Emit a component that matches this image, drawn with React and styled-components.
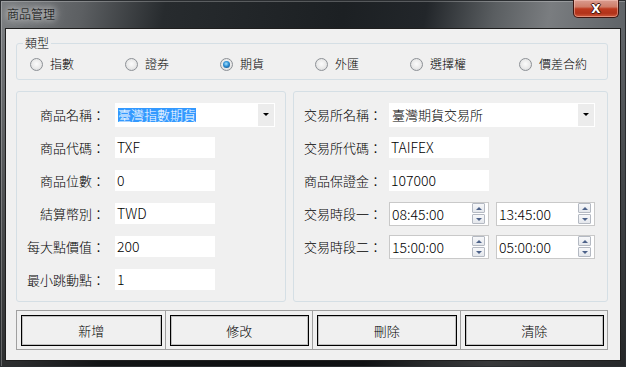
import React from 'react';
import styled, { createGlobalStyle } from 'styled-components';

const GlobalStyle = createGlobalStyle`
  html, body {
    margin: 0;
    padding: 0;
    background: #fff;
  }
  body {
    font-family: 'Noto Sans CJK TC', 'Liberation Sans', sans-serif;
    font-weight: 300;
  }
`;

const types = ['指數', '證券', '期貨', '外匯', '選擇權', '價差合約'];

const leftRows = [
  { label: '商品名稱：', kind: 'combo', value: '臺灣指數期貨', selected: true },
  { label: '商品代碼：', value: 'TXF' },
  { label: '商品位數：', value: '0' },
  { label: '結算幣別：', value: 'TWD' },
  { label: '每大點價值：', value: '200' },
  { label: '最小跳動點：', value: '1' },
];

const rightRows = [
  { label: '交易所名稱：', kind: 'combo', value: '臺灣期貨交易所' },
  { label: '交易所代碼：', value: 'TAIFEX' },
  { label: '商品保證金：', value: '107000' },
  { label: '交易時段一：', kind: 'time', value: ['08:45:00', '13:45:00'] },
  { label: '交易時段二：', kind: 'time', value: ['15:00:00', '05:00:00'] },
];

const actions = ['新增', '修改', '刪除', '清除'];

const App = () => {
  const renderField = (row, comboWidth) => {
    if (row.kind === 'combo') {
      return (
        <ComboBox $width={comboWidth}>
          <ComboText>
            <ComboValue $selected={row.selected}>{row.value}</ComboValue>
          </ComboText>
          <DropButton />
        </ComboBox>
      );
    }
    if (row.kind === 'time') {
      return (
        <TimeRow>
          {row.value.map((t, i) => (
            <TimePicker key={t} $width={i === 0 ? 100 : 99}>
              <TimeText>{t}</TimeText>
              <Spinner>
                <SpinButton $dir="up" />
                <SpinButton $dir="down" />
              </Spinner>
            </TimePicker>
          ))}
        </TimeRow>
      );
    }
    return <TextBox>{row.value}</TextBox>;
  };

  return (
    <>
      <GlobalStyle />
      <Window>
        <TitleBar>
          <TitleText>商品管理</TitleText>
          <CloseButton>X</CloseButton>
        </TitleBar>
        <Client>
          <TypeGroup>
            <GroupLegend>類型</GroupLegend>
            <RadioRow>
              {types.map((t, i) => (
                <RadioItem key={t}>
                  <RadioCircle $checked={i === 2} />
                  <RadioLabel>{t}</RadioLabel>
                </RadioItem>
              ))}
            </RadioRow>
          </TypeGroup>

          <Panels>
            <Panel $labelWidth={88} $gap={10}>
              {leftRows.map(row => (
                <React.Fragment key={row.label}>
                  <FieldLabel>{row.label}</FieldLabel>
                  {renderField(row, 160)}
                </React.Fragment>
              ))}
            </Panel>
            <Panel $labelWidth={88} $gap={7}>
              {rightRows.map(row => (
                <React.Fragment key={row.label}>
                  <FieldLabel>{row.label}</FieldLabel>
                  {renderField(row, 206)}
                </React.Fragment>
              ))}
            </Panel>
          </Panels>

          <ActionGrid>
            {actions.map(a => (
              <ActionCell key={a}>
                <ActionButton>{a}</ActionButton>
              </ActionCell>
            ))}
          </ActionGrid>
        </Client>
      </Window>
    </>
  );
};

const Window = styled.div`
  width: 626px;
  height: 367px;
  box-sizing: border-box;
  display: flex;
  flex-direction: column;
  border: 1px solid #2a2d30;
  box-shadow: inset 1px 1px 0 rgba(255, 255, 255, 0.25);
  background:
    linear-gradient(to bottom, rgba(0, 0, 0, 0) 0px, rgba(0, 0, 0, 0) 30px, rgba(0, 0, 0, 0.55) 100%),
    linear-gradient(
      100deg,
      #7a7d80 0%,
      #5c5f62 12%,
      #272b2e 24%,
      #1c2023 50%,
      #22262a 62%,
      #5a5e61 72%,
      #7a7d80 80%,
      #62666a 90%,
      #52565a 100%
    );
`;

const TitleBar = styled.div`
  height: 27px;
  display: flex;
  justify-content: space-between;
  align-items: flex-start;
  padding: 0 6px 0 6px;
`;

const TitleText = styled.div`
  margin-top: 5px;
  font-size: 12px;
  line-height: 16px;
  color: #000;
  text-shadow:
    0 0 6px rgba(255, 255, 255, 0.9),
    0 0 10px rgba(255, 255, 255, 0.7),
    0 0 14px rgba(255, 255, 255, 0.5);
`;

const CloseButton = styled.div`
  width: 46px;
  height: 18px;
  margin-top: -1px;
  box-sizing: border-box;
  border: 1px solid #3d1510;
  border-top: none;
  border-radius: 0 0 5px 5px;
  box-shadow: inset 0 0 0 1px rgba(255, 210, 200, 0.45);
  background: linear-gradient(
    to bottom,
    #d99c8f 0%,
    #cf7d69 40%,
    #bd3a1f 52%,
    #b1321a 78%,
    #cf5a3c 100%
  );
  display: flex;
  align-items: center;
  justify-content: center;
  font-family: 'DejaVu Sans', sans-serif;
  font-weight: bold;
  font-size: 12px;
  color: #fff;
  text-shadow:
    0 0 1px #3a0c04,
    1px 0 0 #4b1a12,
    -1px 0 0 #4b1a12,
    0 1px 0 #4b1a12,
    0 -1px 0 #4b1a12;
`;

const Client = styled.div`
  flex: 1;
  margin: 0 4px 5px 4px;
  box-sizing: border-box;
  background: #f0f0f0;
  border: 1px solid #1e1e1e;
  padding: 0 12px 0 10px;
  display: flex;
  flex-direction: column;
`;

const TypeGroup = styled.fieldset`
  margin: 7px 0 0;
  padding: 0 0 1px;
  border: 1px solid #d5dfe5;
  border-radius: 3px;
  min-width: 0;
`;

const GroupLegend = styled.legend`
  margin-left: 6px;
  padding: 0 2px;
  font-size: 12px;
  line-height: 14px;
  color: #000;
`;

const RadioRow = styled.div`
  height: 28px;
  display: grid;
  grid-template-columns: repeat(4, 95px) 109px auto;
  align-items: center;
  padding-left: 13px;
`;

const RadioItem = styled.div`
  display: flex;
  align-items: center;
`;

const RadioCircle = styled.span`
  width: 13px;
  height: 13px;
  box-sizing: border-box;
  border-radius: 50%;
  border: 1px solid #8d9196;
  background: radial-gradient(circle at 50% 45%, #fbfbfb 0%, #e9e9e9 55%, #cfd1d3 100%);
  display: flex;
  align-items: center;
  justify-content: center;

  &::after {
    content: '';
    width: 7px;
    height: 7px;
    border-radius: 50%;
    background: ${p =>
      p.$checked
        ? 'radial-gradient(circle at 45% 40%, #a7e3ff 0%, #2d8fd4 45%, #103f72 100%)'
        : 'transparent'};
  }
`;

const RadioLabel = styled.span`
  margin-left: 7px;
  font-size: 12px;
  line-height: 16px;
  color: #000;
`;

const Panels = styled.div`
  margin-top: 11px;
  height: 211px;
  display: grid;
  grid-template-columns: 270px 315px;
  column-gap: 7px;
`;

const Panel = styled.div`
  box-sizing: border-box;
  border: 1px solid #d5dfe5;
  border-radius: 3px;
  padding-top: 6px;
  display: grid;
  grid-template-columns: ${p => p.$labelWidth}px auto;
  column-gap: ${p => p.$gap}px;
  grid-auto-rows: 33px;
  align-items: center;
  align-content: start;
`;

const FieldLabel = styled.div`
  text-align: right;
  font-size: 13px;
  line-height: 16px;
  color: #000;
  white-space: nowrap;
`;

const ComboBox = styled.div`
  width: ${p => p.$width}px;
  height: 24px;
  box-sizing: border-box;
  background: #fff;
  padding: 1px;
  display: flex;
`;

const ComboText = styled.div`
  flex: 1;
  display: flex;
  align-items: center;
  padding-left: 2px;
`;

const ComboValue = styled.span`
  font-size: 13px;
  line-height: 14px;
  color: ${p => (p.$selected ? '#fff' : '#000')};
  background: ${p => (p.$selected ? '#3399ff' : 'transparent')};
`;

const DropButton = styled.div`
  width: 16px;
  background: #ececec;
  display: flex;
  align-items: center;
  justify-content: center;

  &::after {
    content: '';
    border-left: 3px solid transparent;
    border-right: 3px solid transparent;
    border-top: 3px solid #000;
  }
`;

const TextBox = styled.div`
  width: 100px;
  height: 21px;
  box-sizing: border-box;
  background: #fff;
  padding-left: 2px;
  font-size: 14px;
  line-height: 21px;
  color: #000;
`;

const TimeRow = styled.div`
  display: flex;
  gap: 7px;
`;

const TimePicker = styled.div`
  width: ${p => p.$width}px;
  height: 24px;
  box-sizing: border-box;
  background: #fff;
  border: 1px solid #c9c9c9;
  display: flex;
  align-items: center;
  justify-content: space-between;
  padding: 0 3px 0 2px;
`;

const TimeText = styled.span`
  font-size: 14px;
  line-height: 18px;
  color: #000;
`;

const Spinner = styled.div`
  display: flex;
  flex-direction: column;
  gap: 1px;
`;

const SpinButton = styled.div`
  width: 13px;
  height: 10px;
  box-sizing: border-box;
  border: 1px solid #b4b9c2;
  border-radius: 1px;
  background: linear-gradient(to bottom, #f7f8fa 0%, #e4e7ec 100%);
  display: flex;
  align-items: center;
  justify-content: center;

  &::after {
    content: '';
    border-left: 3px solid transparent;
    border-right: 3px solid transparent;
    ${p =>
      p.$dir === 'up'
        ? 'border-bottom: 3px solid #4d6289;'
        : 'border-top: 3px solid #4d6289;'}
  }
`;

const ActionGrid = styled.div`
  margin-top: 8px;
  height: 40px;
  box-sizing: border-box;
  border: 1px solid #a0a0a0;
  display: grid;
  grid-template-columns: repeat(4, 1fr);
`;

const ActionCell = styled.div`
  padding: 4px 3px 3px 4px;
  display: flex;

  & + & {
    border-left: 1px solid #a0a0a0;
  }
`;

const ActionButton = styled.button`
  flex: 1;
  margin: 0;
  background: #f0f0f0;
  border: 1px solid #000;
  box-shadow: inset 0 0 0 1px rgba(0, 0, 0, 0.2);
  font-family: 'Noto Sans CJK TC', 'Liberation Sans', sans-serif;
  font-weight: 300;
  font-size: 13px;
  color: #000;
  padding: 0;
`;

export default App;
